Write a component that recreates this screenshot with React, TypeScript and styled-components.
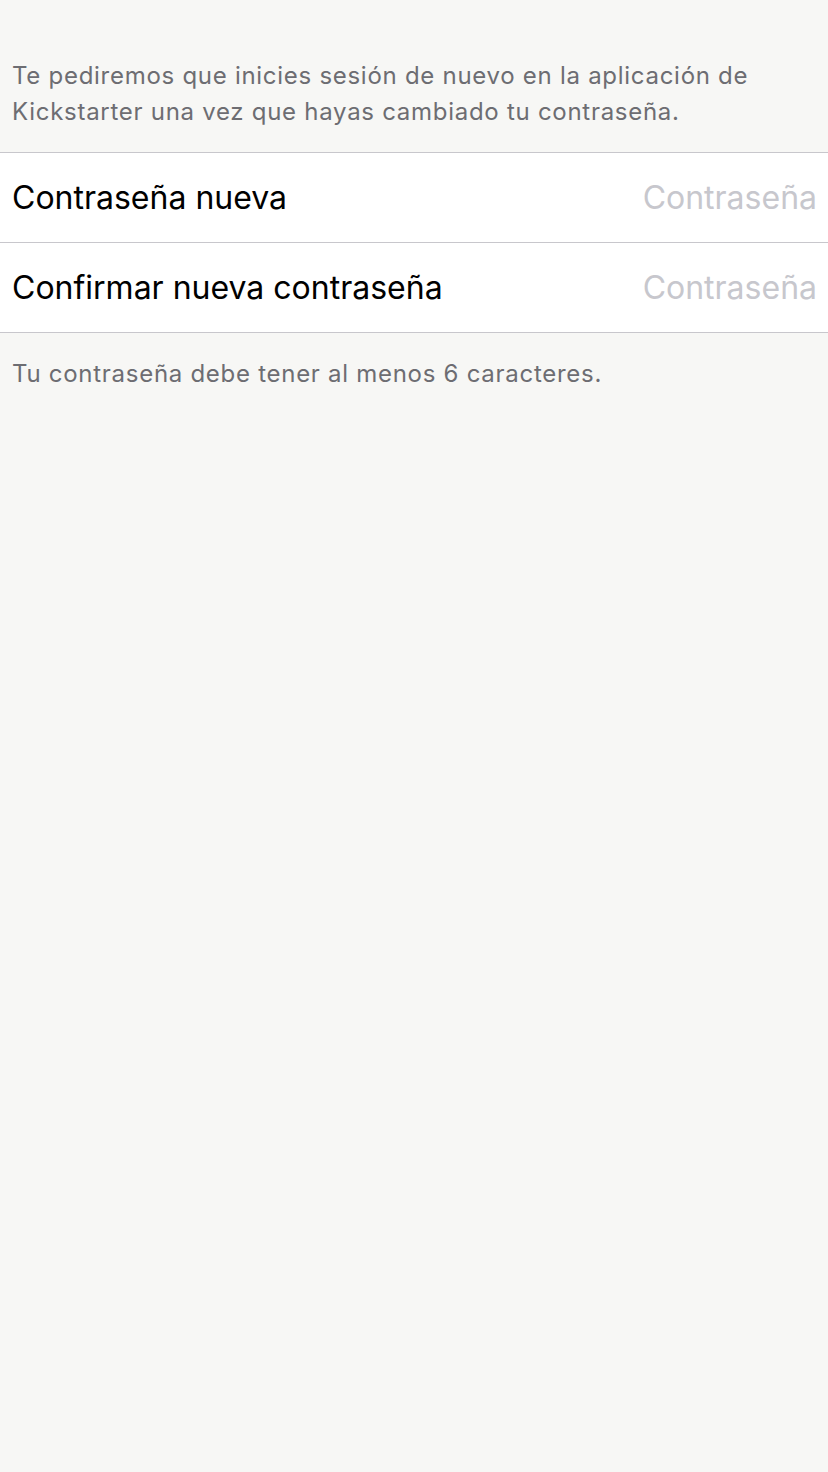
import styled, { createGlobalStyle } from "styled-components";

const GlobalStyle = createGlobalStyle`
  html, body {
    margin: 0;
    padding: 0;
    background: #f7f7f5;
  }
  body {
    font-family: Inter, "Noto Sans", sans-serif;
    -webkit-font-smoothing: antialiased;
  }
`;

const Screen = styled.div`
  min-height: 1472px;
  background: #f7f7f5;
`;

const Note = styled.p<{ $top: number; $bottom: number }>`
  margin: 0;
  padding: ${(p) => p.$top}px 12px ${(p) => p.$bottom}px 12px;
  font-size: 24px;
  line-height: 36px;
  letter-spacing: 0.72px;
  color: #6d6d72;
`;

const Group = styled.div`
  background: #ffffff;
  border-top: 1px solid #c8c7cc;
  border-bottom: 1px solid #c8c7cc;
`;

const Row = styled.label`
  display: flex;
  align-items: center;
  justify-content: space-between;
  height: 89px;
  padding: 0 11px 0 12px;
  & + & {
    border-top: 1px solid #c8c7cc;
  }
`;

const RowLabel = styled.span`
  font-size: 32px;
  color: #000000;
  white-space: nowrap;
`;

const Field = styled.input`
  border: none;
  outline: none;
  background: transparent;
  text-align: right;
  font-family: inherit;
  font-size: 32px;
  color: #000;
  width: 300px;
  padding: 0;
  &::placeholder {
    color: #c7c7cd;
  }
`;

export default function App() {
  return (
    <Screen>
      <GlobalStyle />
      <Note $top={58} $bottom={22}>
        Te pediremos que inicies sesión de nuevo en la aplicación de
        Kickstarter una vez que hayas cambiado tu contraseña.
      </Note>
      <Group>
        <Row>
          <RowLabel>Contraseña nueva</RowLabel>
          <Field type="password" placeholder="Contraseña" />
        </Row>
        <Row>
          <RowLabel>Confirmar nueva contraseña</RowLabel>
          <Field type="password" placeholder="Contraseña" />
        </Row>
      </Group>
      <Note $top={23} $bottom={0}>
        Tu contraseña debe tener al menos 6 caracteres.
      </Note>
    </Screen>
  );
}
